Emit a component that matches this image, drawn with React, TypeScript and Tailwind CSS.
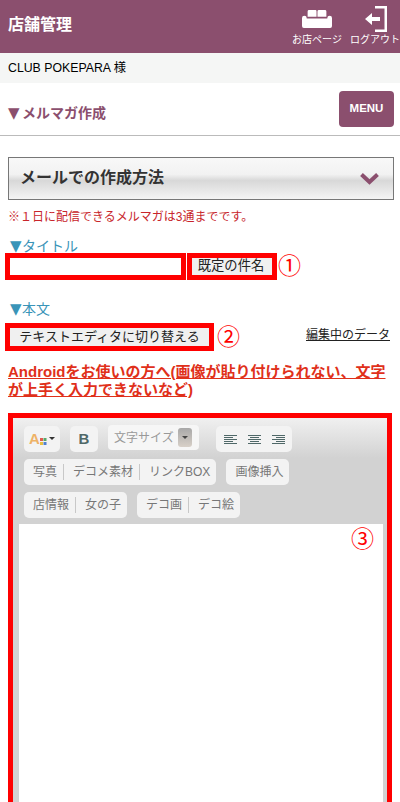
import React from 'react';

const jp = '[font-family:"Liberation_Sans","Noto_Sans_CJK_JP",sans-serif]';

function Tri({ className = '' }: { className?: string }) {
  return <span className={`inline-block [font-family:'DejaVu_Sans'] text-[15px] ${className}`}>▼</span>;
}

function AlignIcon({ kind }: { kind: 'left' | 'center' | 'right' }) {
  const rows = [13, 9, 13, 9, 13];
  return (
    <svg width="13" height="11" viewBox="0 0 13 11" fill="#4f6868">
      {rows.map((w, i) => {
        const x = kind === 'left' ? 0 : kind === 'center' ? (13 - w) / 2 : 13 - w;
        return <rect key={i} x={x} y={i * 2 + 1} width={w} height="1" />;
      })}
    </svg>
  );
}

function ToolGroup({ items, className = '' }: { items: string[]; className?: string }) {
  return (
    <div className={`flex h-[26px] items-center rounded-[5px] bg-[#f3f3f3] text-[12px] text-[#777] ${className}`}>
      {items.map((item, i) => (
        <span key={item} className={`pr-[6px] pl-[9px] leading-[16px] ${i > 0 ? 'border-l border-[#c8c8c8]' : ''}`}>
          {item}
        </span>
      ))}
    </div>
  );
}

export default function App() {
  return (
    <div className={`h-[802px] w-[400px] overflow-hidden bg-white ${jp}`}>
      <header className="flex h-[53px] items-start justify-between bg-[#8b4f6e] pl-2 text-white">
        <h1 className="mt-[15px] text-[16px] leading-[20px] font-bold">店舗管理</h1>
        <div className="flex">
          <a className="mr-[8px] flex w-[50px] flex-col items-center pt-[10px] text-[10px] leading-[12px] whitespace-nowrap">
            <svg width="30" height="18" viewBox="0 0 32 19" fill="white" className="mb-[6px]">
              <path d="M6 1.500Q6 0 7.500 0h7Q15.500 0 15.500 1.500V7H6zM16.500 1.500Q16.500 0 18 0h6.500Q26 0 26 1.500V7H16.500z" />
              <path d="M0 8.500Q0 6 2.500 6T5 8.500V9h22v-.5Q27 6 29.500 6T32 8.500V17Q32 19 30 19H2Q0 19 0 17z" />
            </svg>
            <span>お店ページ</span>
          </a>
          <a className="flex w-[50px] flex-col items-center pt-[6px] text-[10px] leading-[12px] whitespace-nowrap">
            <svg width="26" height="26" viewBox="0 0 26 26" className="mb-[2px]" fill="white">
              <path d="M13 0h12v26H13v-2.500h9.500V2.500H13z" />
              <path d="M3 13l7-6v4h8v4h-8v4z" />
            </svg>
            <span>ログアウト</span>
          </a>
        </div>
      </header>

      <div className="flex h-[30px] items-center bg-[#f5f6f5] pl-2 text-[12.300px] text-black">CLUB POKEPARA 様</div>

      <div className="flex h-[53px] items-center justify-between border-b border-[#bbb] pr-[6px] pl-2">
        <h2 className="mt-[8px] text-[14px] font-bold text-[#8b4f6e]">
          <Tri className="w-[14px]" />
          メルマガ作成
        </h2>
        <button className="flex h-[36px] w-[55px] items-center justify-center rounded-[4px] bg-[#8b4f6e] text-[11.500px] font-bold text-white">
          MENU
        </button>
      </div>

      <div className="px-2">
        <div className="mt-[21px] flex h-[43px] w-[386px] items-center justify-between border border-[#777] bg-[linear-gradient(#f8f8f8,#f2f2f2_40%,#d8d8d8_55%,#f4f4f4)] pr-[14px] pl-[11px]">
          <span className="mb-[1px] text-[16px] font-bold text-[#333]">メールでの作成方法</span>
          <svg width="19" height="12" viewBox="0 0 19 12" fill="none" stroke="#8b4f6e" strokeWidth="4">
            <path d="M1.500 1.500l8 7.500 8-7.500" />
          </svg>
        </div>
        <p className="mt-[9px] text-[12px] leading-[16px] text-[#c8252b]">※１日に配信できるメルマガは3通までです。</p>
        <p className="mt-[14px] pl-[2px] text-[14px] leading-[14px] text-[#3a94b8]">
          <Tri className="w-[12px]" />
          タイトル
        </p>
      </div>

      <div className="flex items-center pl-[5px]">
        <div className="h-[27px] w-[181px] border-[5px] border-[#ff0000] bg-white" />
        <div className="ml-[1px] flex h-[27px] w-[90px] items-center justify-center border-[5px] border-[#ff0000] bg-[#f0f0f0] pr-[2px] pb-[1px] text-[13.300px] text-[#222]">
          既定の件名
        </div>
        <span className="ml-[1px] text-[23px] leading-[27px] text-[#ff0000]">①</span>
      </div>

      <p className="mt-[22px] pl-[10px] text-[14px] leading-[14px] text-[#3a94b8]">
        <Tri className="w-[12px]" />
        本文
      </p>

      <div className="mt-[7px] flex items-center pr-[10px] pl-[5px]">
        <div className="flex h-[28px] w-[209px] items-center justify-center border-[5px] border-[#ff0000] bg-[#f0f0f0] pb-[1px] text-[13px] text-[#222]">
          テキストエディタに切り替える
        </div>
        <span className="ml-[3px] text-[23px] leading-[28px] text-[#ff0000]">②</span>
        <a className="mb-[5px] ml-auto text-[12px] text-[#222] underline">編集中のデータ</a>
      </div>

      <a className="mt-[12px] block px-2 text-[15px] leading-[18px] font-bold text-[#e0301a] underline">
        Androidをお使いの方へ(画像が貼り付けられない、文字が上手く入力できないなど)
      </a>

      <div className="relative mx-2 mt-[14px] h-[400px] border-[5px] border-b-0 border-[#ff0000]">
        <div className="h-full bg-[linear-gradient(#f0f0f0,#d2d2d2_40px)] pt-[8px] pr-[4px] pl-[6px]">
          <div className="flex h-[33px] items-start">
            <div className="ml-[5px] flex h-[26px] w-[36px] items-center justify-center rounded-[5px] bg-[#f3f3f3]">
              <span className="text-[15px] font-bold text-[#eeb266]">A</span>
              <svg width="7" height="8" viewBox="0 0 7 8" className="mt-[4px]">
                <rect width="3" height="3" x="0" y="1" fill="#e05a50" />
                <rect width="3" height="3" x="3.500" y="1" fill="#58a868" />
                <rect width="3" height="3" x="0" y="5" fill="#e8c040" />
                <rect width="3" height="3" x="3.500" y="5" fill="#5080d0" />
              </svg>
              <span className="mb-[1px] ml-[2px] h-0 w-0 border-x-[3px] border-t-[3px] border-x-transparent border-t-[#333]" />
            </div>
            <div className="ml-[10px] flex h-[26px] w-[28px] items-center justify-center rounded-[5px] bg-[#f3f3f3] text-[15px] font-black text-[#4f6868]">
              B
            </div>
            <div className="mt-[-1px] ml-[10px] flex h-[25px] w-[91px] items-center rounded-[4px] bg-[#f6f6f6] pl-[6px] text-[12px] text-[#999]">
              文字サイズ
              <span className="ml-[4px] flex h-[19px] w-[14px] items-center justify-center rounded-[3px] bg-[linear-gradient(#a8a8a8,#d8d0c8)]">
                <span className="h-0 w-0 border-x-[3px] border-t-[3px] border-x-transparent border-t-[#444]" />
              </span>
            </div>
            <div className="ml-[17px] flex h-[26px] w-[76px] items-center justify-center gap-[11px] rounded-[5px] bg-[#f3f3f3]">
              <AlignIcon kind="left" />
              <AlignIcon kind="center" />
              <AlignIcon kind="right" />
            </div>
          </div>
          <div className="flex h-[33px] items-start pl-[5px]">
            <ToolGroup items={['写真', 'デコメ素材', 'リンクBOX']} />
            <ToolGroup items={['画像挿入']} className="ml-[10px]" />
          </div>
          <div className="flex h-[32px] items-start pl-[5px]">
            <ToolGroup items={['店情報', '女の子']} />
            <ToolGroup items={['デコ画', 'デコ絵']} className="ml-[10px]" />
          </div>
          <div className="relative h-[300px] bg-white">
            <span className="absolute top-[1px] right-[9px] text-[23px] leading-[28px] text-[#ff0000]">③</span>
          </div>
        </div>
      </div>
    </div>
  );
}
